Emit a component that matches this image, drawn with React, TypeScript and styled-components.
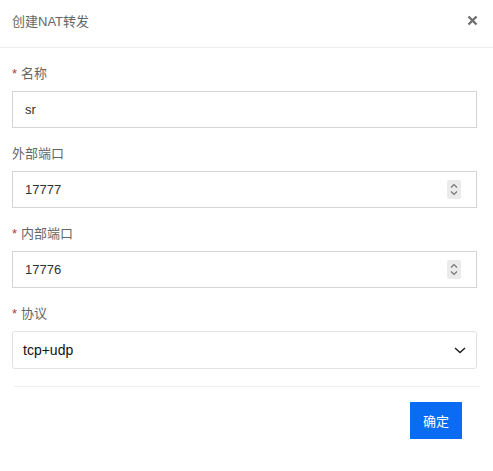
import React from 'react';
import styled, { createGlobalStyle } from 'styled-components';

const GlobalStyle = createGlobalStyle`
  html, body {
    margin: 0;
    padding: 0;
    background: #fff;
  }
  body {
    font-family: "Liberation Sans", "Noto Sans CJK SC", sans-serif;
  }
`;

interface FieldProps {
  label: string;
  required?: boolean;
  children: React.ReactNode;
}

const Field: React.FC<FieldProps> = ({ label, required, children }) => (
  <FieldBox>
    <Label>
      {required && <Star>*</Star>}
      {label}
    </Label>
    {children}
  </FieldBox>
);

const Spinner = () => (
  <SpinBox>
    <svg width="14" height="19" viewBox="0 0 14 19">
      <path d="M4 7.5 L7 4.5 L10 7.5" fill="none" stroke="#777" strokeWidth="1.2" />
      <path d="M4 11.5 L7 14.5 L10 11.5" fill="none" stroke="#777" strokeWidth="1.2" />
    </svg>
  </SpinBox>
);

const App: React.FC = () => {
  return (
    <>
      <GlobalStyle />
      <Modal>
        <Header>
          <Title>创建NAT转发</Title>
          <Close>
            <svg width="11" height="11" viewBox="0 0 11 11">
              <path d="M1.5 1.5 L9.5 9.5 M9.5 1.5 L1.5 9.5" stroke="#6f6f6f" strokeWidth="2.4" />
            </svg>
          </Close>
        </Header>
        <Form>
          <Field label="名称" required>
            <InputBox>
              <Value>sr</Value>
            </InputBox>
          </Field>
          <Field label="外部端口">
            <InputBox>
              <Value>17777</Value>
              <Spinner />
            </InputBox>
          </Field>
          <Field label="内部端口" required>
            <InputBox>
              <Value>17776</Value>
              <Spinner />
            </InputBox>
          </Field>
          <Field label="协议" required>
            <SelectBox>
              <SelectValue>tcp+udp</SelectValue>
              <svg width="14" height="10" viewBox="0 0 14 10">
                <path d="M2 3 L7 7.5 L12 3" fill="none" stroke="#222" strokeWidth="1.5" />
              </svg>
            </SelectBox>
          </Field>
        </Form>
        <Divider />
        <Footer>
          <Button>确定</Button>
        </Footer>
      </Modal>
    </>
  );
};

export default App;

const Modal = styled.div`
  width: 493px;
  height: 471px;
  background: #fff;
  display: flex;
  flex-direction: column;
`;

const Header = styled.div`
  height: 48px;
  display: flex;
  align-items: center;
  justify-content: space-between;
  padding: 0 15px 7px 12px;
  box-sizing: border-box;
  border-bottom: 1px solid #eeeeee;
`;

const Title = styled.div`
  font-size: 13px;
  color: #666;
`;

const Close = styled.div`
  display: flex;
  align-items: center;
`;

const Form = styled.div`
  padding: 16px 16px 0 12px;
  display: flex;
  flex-direction: column;
  gap: 16px;
`;

const FieldBox = styled.div`
  display: flex;
  flex-direction: column;
  gap: 7px;
`;

const Label = styled.div`
  font-size: 13px;
  line-height: 20px;
  color: #666;
`;

const Star = styled.span`
  color: #b03a3a;
  margin-right: 4px;
`;

const InputBox = styled.div`
  height: 37px;
  box-sizing: border-box;
  border: 1px solid #d4d4d4;
  display: flex;
  align-items: center;
  justify-content: space-between;
  padding: 0 15px 0 12px;
`;

const Value = styled.span`
  font-size: 13px;
  color: #333;
`;

const SpinBox = styled.div`
  width: 14px;
  height: 19px;
  background: #ebebeb;
  border-radius: 2px;
  display: flex;
`;

const SelectBox = styled.div`
  height: 38px;
  box-sizing: border-box;
  border: 1px solid #e2e2e2;
  border-radius: 3px;
  display: flex;
  align-items: center;
  justify-content: space-between;
  padding: 0 9px 0 10px;
`;

const SelectValue = styled.span`
  font-size: 14px;
  color: #111;
`;

const Divider = styled.div`
  margin: 17px 13px 0 14px;
  border-top: 1px solid #eeeeee;
`;

const Footer = styled.div`
  display: flex;
  justify-content: flex-end;
  padding: 15px 31px 0 0;
`;

const Button = styled.div`
  width: 52px;
  height: 37px;
  background: #0a6cf2;
  color: #fff;
  font-size: 13px;
  display: flex;
  align-items: center;
  justify-content: center;
`;
